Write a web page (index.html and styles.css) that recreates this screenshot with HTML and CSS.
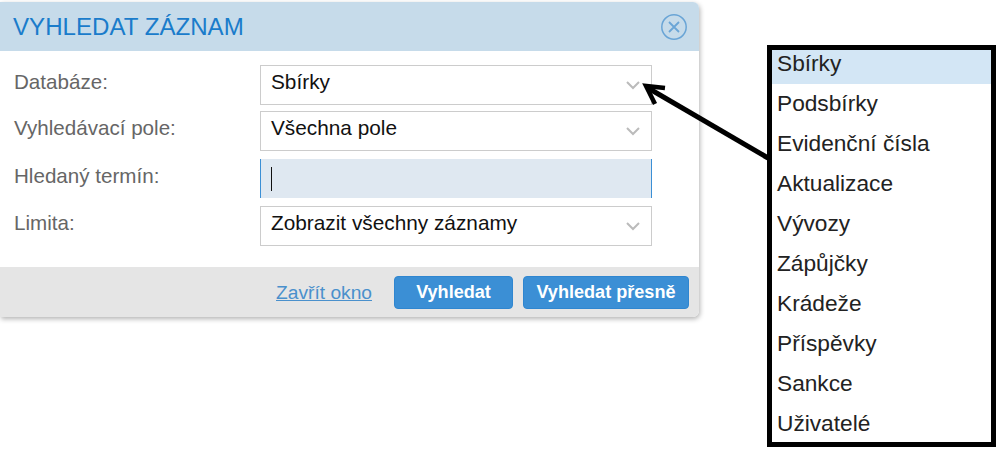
FILE: index.html
```html
<!DOCTYPE html>
<html lang="cs">

<head>
  <meta charset="UTF-8">
  <title>Vyhledat záznam</title>
  <link rel="stylesheet" href="styles.css">
</head>

<body>
  <div class="page">
    <!-- Search dialog -->
    <div class="dialog">
      <div class="dialog-head">
        <h1>VYHLEDAT ZÁZNAM</h1>
        <svg class="close-icon" width="28" height="28" viewBox="0 0 28 28">
          <circle cx="14" cy="14" r="12.2" fill="none" stroke="#6aa5d6" stroke-width="1.5" />
          <path d="M9 9 L19 19 M19 9 L9 19" stroke="#6aa5d6" stroke-width="1.8" fill="none" />
        </svg>
      </div>

      <div class="dialog-body">
        <div class="row">
          <label>Databáze:</label>
          <div class="select">Sbírky
            <svg class="chevron" width="16" height="10" viewBox="0 0 16 10"><path d="M2 2 L8 8 L14 2" /></svg>
          </div>
        </div>
        <div class="row">
          <label>Vyhledávací pole:</label>
          <div class="select">Všechna pole
            <svg class="chevron" width="16" height="10" viewBox="0 0 16 10"><path d="M2 2 L8 8 L14 2" /></svg>
          </div>
        </div>
        <div class="row row-term">
          <label>Hledaný termín:</label>
          <div class="term"><span class="caret"></span></div>
        </div>
        <div class="row">
          <label>Limita:</label>
          <div class="select">Zobrazit všechny záznamy
            <svg class="chevron" width="16" height="10" viewBox="0 0 16 10"><path d="M2 2 L8 8 L14 2" /></svg>
          </div>
        </div>
      </div>

      <div class="dialog-foot">
        <a href="#" class="close-link">Zavřít okno</a>
        <button class="btn btn-search">Vyhledat</button>
        <button class="btn btn-exact">Vyhledat přesně</button>
      </div>
    </div>

    <!-- Options of the first select -->
    <ul class="options">
      <li class="active">Sbírky</li>
      <li>Podsbírky</li>
      <li>Evidenční čísla</li>
      <li>Aktualizace</li>
      <li>Vývozy</li>
      <li>Zápůjčky</li>
      <li>Krádeže</li>
      <li>Příspěvky</li>
      <li>Sankce</li>
      <li>Uživatelé</li>
    </ul>
  </div>

  <!-- Arrow from the list to the select -->
  <svg class="arrow" width="1001" height="450" viewBox="0 0 1001 450">
    <path d="M768 158 L648 88" stroke="#000" stroke-width="5" fill="none" />
    <path d="M665 88 L646 86 L655 104" stroke="#000" stroke-width="4.5" fill="none" />
  </svg>
</body>

</html>
```

FILE: styles.css
```css
html,
body {
  margin: 0;
  padding: 0;
  background-color: white;
}

body {
  font-family: "Liberation Sans", Arial, sans-serif;
  height: 450px;
  overflow: hidden;
}

.page {
  display: flex;
  align-items: flex-start;
  padding-top: 2px;
}

.dialog {
  width: 699px;
  height: 315px;
  display: flex;
  flex-direction: column;
  background-color: white;
  border-top-right-radius: 6px;
  border-bottom-right-radius: 6px;
  box-shadow: 1px 2px 5px rgba(0, 0, 0, 0.3);
  overflow: hidden;
}

.dialog-head {
  height: 49px;
  display: flex;
  align-items: center;
  justify-content: space-between;
  padding: 0 11px 0 13px;
  background-color: #c6dbea;
}

.dialog-head h1 {
  margin: 0;
  font-size: 24.1px;
  font-weight: normal;
  color: #1a7ccb;
}

.dialog-body {
  flex: 1;
  padding-top: 14px;
}

.row {
  display: flex;
  align-items: center;
  height: 40px;
  margin-bottom: 6px;
}

.row-term {
  height: 39px;
  margin-top: 8px;
  margin-bottom: 8px;
}

.row label {
  width: 260px;
  padding-left: 14px;
  box-sizing: border-box;
  font-size: 20.6px;
  color: #666;
  position: relative;
  top: -3px;
}

.select {
  width: 392px;
  height: 40px;
  box-sizing: border-box;
  display: flex;
  align-items: center;
  justify-content: space-between;
  padding: 0 10px 6px 10px;
  border: 1px solid #ccc;
  font-size: 20.8px;
  color: #111;
}

.chevron {
  position: relative;
  top: 3px;
}

.chevron path {
  fill: none;
  stroke: #bbb;
  stroke-width: 2;
}

.term {
  width: 392px;
  height: 39px;
  box-sizing: border-box;
  display: flex;
  align-items: center;
  padding-left: 10px;
  background-color: #dfe8f1;
  border-left: 1px solid #3b8fd5;
  border-right: 1px solid #3b8fd5;
}

.caret {
  width: 1px;
  height: 24px;
  background-color: #111;
}

.dialog-foot {
  height: 50px;
  box-sizing: border-box;
  display: flex;
  align-items: center;
  justify-content: flex-end;
  padding: 1px 10px 0 0;
  background-color: #e5e5e5;
}

.close-link {
  margin-right: 22px;
  font-size: 19.2px;
  color: #4a90cc;
}

.btn {
  height: 33px;
  padding: 0;
  border: 1px solid #2f86d0;
  border-radius: 4px;
  background-color: #3b8fd5;
  color: white;
  font-family: inherit;
  font-size: 18.1px;
  font-weight: bold;
}

.btn-search {
  width: 119px;
  margin-right: 10px;
}

.btn-exact {
  width: 166px;
}

.options {
  list-style: none;
  width: 219px;
  height: 392px;
  margin: 43px 0 0 68px;
  padding: 0;
  border: 5px solid black;
  overflow: hidden;
  font-size: 22.7px;
  color: #222;
}

.options li {
  height: 40px;
  line-height: 38px;
  padding-left: 5px;
}

.options li.active {
  height: 34px;
  line-height: 27px;
  background-color: #d3e6f5;
}

.arrow {
  position: absolute;
  left: 0;
  top: 0;
  pointer-events: none;
}
```
